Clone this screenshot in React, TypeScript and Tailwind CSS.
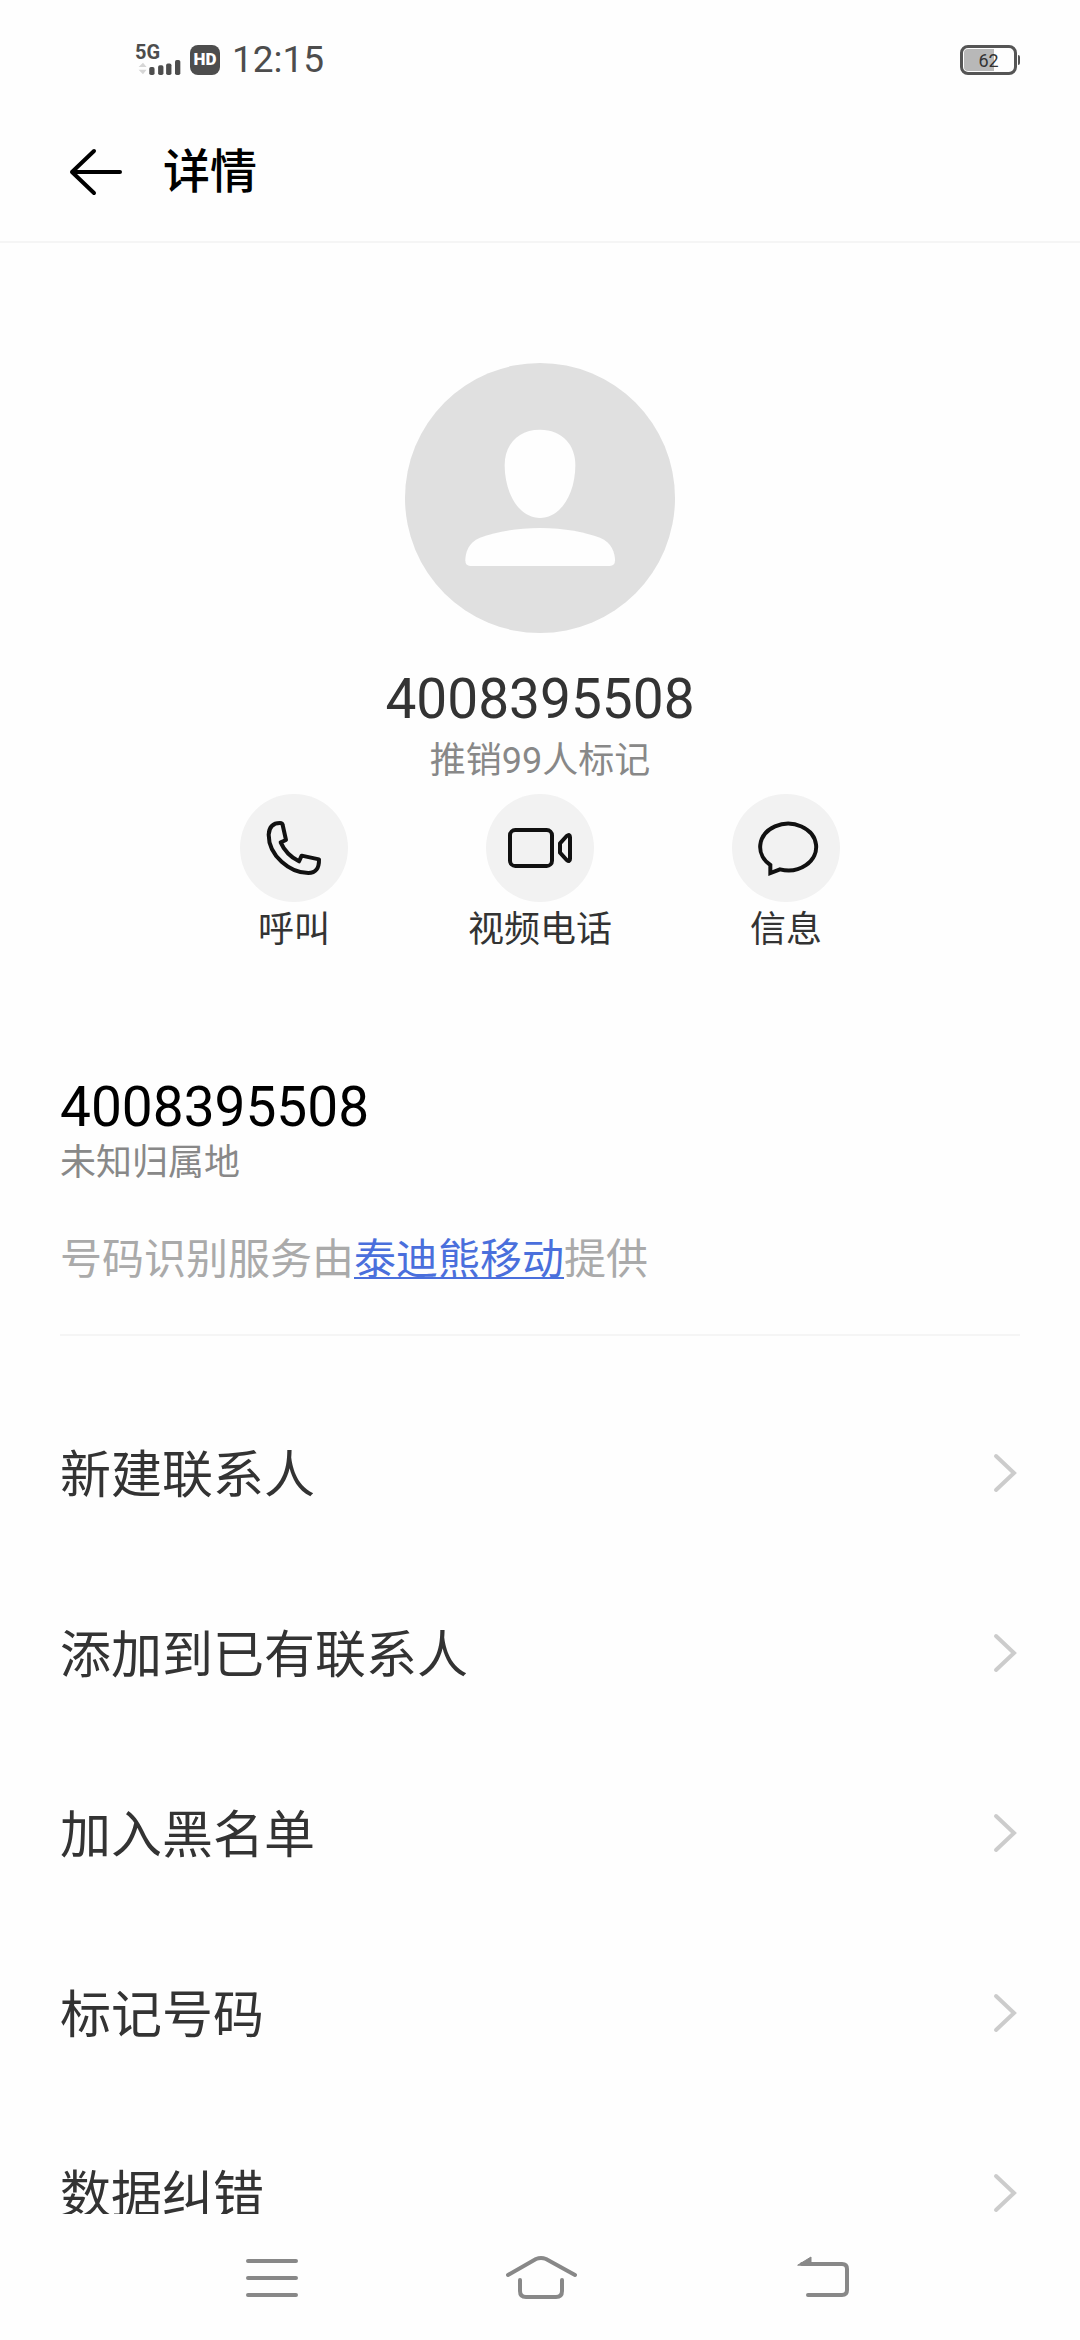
import type { ReactNode } from "react";

const actions: { label: string; icon: ReactNode }[] = [
  {
    label: "呼叫",
    icon: (
      <path d="M120 87 Q127 87 128 93 L138 138 L122 145 Q138 182 177 202 L185 185 L237 196 Q238 237 205 237 C150 237 86 185 86 122 Q88 87 120 87 Z" />
    ),
  },
  {
    label: "视频电话",
    icon: (
      <>
        <rect x="72" y="108" width="126" height="108" rx="16" />
        <path d="M222 148 L242 126 Q252 118 252 130 V194 Q252 206 242 198 L222 176 Z" />
      </>
    ),
  },
  {
    label: "信息",
    icon: (
      <path
        strokeLinejoin="miter"
        d="M115 213 A84 70 0 1 1 144 226 L115 237 Z"
      />
    ),
  },
];

const menuItems = [
  "新建联系人",
  "添加到已有联系人",
  "加入黑名单",
  "标记号码",
  "数据纠错",
];

function StatusBar() {
  return (
    <div className="flex h-[100px] shrink-0 items-center justify-between pt-5 pr-[60px] pl-[135px] text-[#4d4d4d]">
      <div className="flex items-center">
        <div className="flex h-8 flex-col justify-between">
          <span className="text-[20px] leading-4 font-bold">5G</span>
          <svg width="48" height="18" viewBox="0 0 48 18">
            <path d="M1 8 L6 3 L10 8 Z M1 11 H10 L6 16 Z" fill="#d6d6d6" />
            <g fill="currentColor">
              <rect x="13" y="8" width="6" height="9" rx="2" />
              <rect x="23" y="6" width="6" height="11" rx="2" />
              <rect x="32" y="4" width="6" height="13" rx="2" />
              <rect x="42" y="0" width="6" height="17" rx="2" />
            </g>
          </svg>
        </div>
        <span className="ml-[7px] flex size-[30px] items-center justify-center rounded-lg bg-[#4d4d4d] text-[17px] font-black text-white">
          HD
        </span>
        <span className="ml-3 text-[37px] leading-10">12:15</span>
      </div>

      <div className="flex items-center gap-px">
        <div className="relative flex h-[30px] w-[57px] items-center justify-center rounded-lg border-3 border-[#555]">
          <span className="absolute inset-y-px left-px w-[30px] rounded-l-sm bg-[#b8b8b8]" />
          <span className="relative text-[18px] text-[#333]">62</span>
        </div>
        <span className="h-[10px] w-[2px] rounded-r-sm bg-[#555]" />
      </div>
    </div>
  );
}

function Header() {
  return (
    <header className="flex h-[143px] shrink-0 items-center gap-10 border-b-2 border-[#f5f5f5] px-[69px] pt-[3px] text-black">
      <button type="button" aria-label="返回">
        <svg
          width="54"
          height="48"
          viewBox="0 0 54 48"
          fill="none"
          stroke="currentColor"
          strokeWidth="4"
          strokeLinecap="round"
          strokeLinejoin="round"
        >
          <path d="M25 3 L3 24 L25 45 M3 24 H51" />
        </svg>
      </button>
      <h1 className="text-[47px] leading-[64px] font-medium">详情</h1>
    </header>
  );
}

function Avatar() {
  return (
    <svg width="270" height="270" viewBox="0 0 810 810">
      <circle cx="405" cy="405" r="405" fill="#e0e0e0" />
      <g fill="#fefefe">
        <path d="M405 200 C472 200 511 246 511 306 C511 395 465 465 405 465 C345 465 299 395 299 306 C299 246 338 200 405 200 Z" />
        <path d="M405 495 C480 495 540 508 585 524 C620 538 630 570 630 592 Q630 609 614 609 H196 Q181 609 181 592 C181 570 190 538 225 524 C270 508 330 495 405 495 Z" />
      </g>
    </svg>
  );
}

function NavBar() {
  return (
    <nav className="grid h-[126px] shrink-0 grid-cols-3 items-center justify-items-center px-[12.5%] text-[#888]">
      <button type="button" aria-label="最近任务">
        <NavIcon>
          <path d="M26 8 H74 M26 25 H74 M26 42 H74" />
        </NavIcon>
      </button>
      <button type="button" aria-label="主屏幕">
        <NavIcon>
          <path d="M16 22 L44 6 Q49 4 54 6 L83 22" />
          <path d="M28 27 V38 Q28 44 34 44 H64 Q70 44 70 38 V27" />
        </NavIcon>
      </button>
      <button type="button" aria-label="返回上一页">
        <NavIcon>
          <path d="M40 11 H80 Q85 11 85 16 V37 Q85 42 80 42 H46" />
          <path d="M36 12 L49 4 V12 Z" fill="currentColor" strokeWidth="1" />
        </NavIcon>
      </button>
    </nav>
  );
}

function NavIcon({ children }: { children: ReactNode }) {
  return (
    <svg
      width="96"
      height="48"
      viewBox="0 0 96 48"
      fill="none"
      stroke="currentColor"
      strokeWidth="4"
      strokeLinecap="round"
      strokeLinejoin="round"
    >
      {children}
    </svg>
  );
}

export default function App() {
  return (
    <div className="flex h-dvh flex-col bg-[#fefefe] font-[Roboto,'Noto_Sans_CJK_SC',sans-serif] text-[#333]">
      <StatusBar />
      <Header />

      <main className="min-h-0 flex-1 overflow-y-auto px-[60px] [scrollbar-width:none]">
        <section className="flex flex-col items-center pt-[120px]">
          <Avatar />
          <h2 className="mt-[30px] text-[55px] leading-[72px]">4008395508</h2>
          <p className="text-[36px] leading-[52px] text-[#888]">
            推销99人标记
          </p>

          <div className="mt-[7px] flex gap-[66px]">
            {actions.map(({ label, icon }) => (
              <button
                key={label}
                type="button"
                className="flex w-[180px] flex-col items-center"
              >
                <svg
                  width="108"
                  height="108"
                  viewBox="0 0 324 324"
                  className="rounded-full bg-[#f2f2f2]"
                  fill="none"
                  stroke="#111"
                  strokeWidth="12"
                  strokeLinejoin="round"
                >
                  {icon}
                </svg>
                <span className="text-[36px] leading-[56px]">{label}</span>
              </button>
            ))}
          </div>
        </section>

        <section className="mt-[113px] border-b-2 border-[#f5f5f5] pb-[42px]">
          <p className="text-[55px] leading-[72px] text-black">4008395508</p>
          <p className="text-[36px] leading-10 text-[#888]">未知归属地</p>
          <p className="mt-[45px] text-[42px] leading-[64px] text-[#aaa]">
            号码识别服务由
            <a
              href="#provider"
              className="text-[#4a6fdc] underline decoration-2 underline-offset-3"
            >
              泰迪熊移动
            </a>
            提供
          </p>
        </section>

        <ul className="mt-12">
          {menuItems.map((item) => (
            <li key={item}>
              <button
                type="button"
                className="flex h-[180px] w-full items-center justify-between text-[51px]"
              >
                <span className="pt-1">{item}</span>
                <svg
                  width="30"
                  height="44"
                  viewBox="0 0 30 44"
                  fill="none"
                  stroke="#ccc"
                  strokeWidth="4"
                  strokeLinecap="round"
                >
                  <path d="M6 4 L24 21 L6 38" />
                </svg>
              </button>
            </li>
          ))}
        </ul>
      </main>

      <NavBar />
    </div>
  );
}
